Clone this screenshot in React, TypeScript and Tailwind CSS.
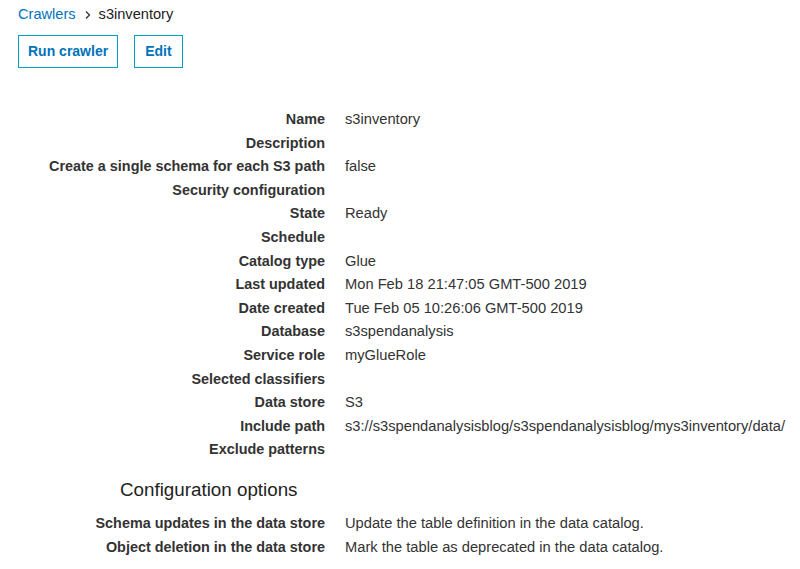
const details: [string, string][] = [
  ["Name", "s3inventory"],
  ["Description", ""],
  ["Create a single schema for each S3 path", "false"],
  ["Security configuration", ""],
  ["State", "Ready"],
  ["Schedule", ""],
  ["Catalog type", "Glue"],
  ["Last updated", "Mon Feb 18 21:47:05 GMT-500 2019"],
  ["Date created", "Tue Feb 05 10:26:06 GMT-500 2019"],
  ["Database", "s3spendanalysis"],
  ["Service role", "myGlueRole"],
  ["Selected classifiers", ""],
  ["Data store", "S3"],
  ["Include path", "s3://s3spendanalysisblog/s3spendanalysisblog/mys3inventory/data/"],
  ["Exclude patterns", ""],
]

const config: [string, string][] = [
  ["Schema updates in the data store", "Update the table definition in the data catalog."],
  ["Object deletion in the data store", "Mark the table as deprecated in the data catalog."],
]

function Rows({ rows }: { rows: [string, string][] }) {
  return (
    <div className="grid grid-cols-[325px_1fr] gap-x-5">
      {rows.map(([k, v]) => (
        <div key={k} className="contents">
          <div className="text-right font-bold text-[14.4px] leading-[23.6px] whitespace-nowrap">{k}</div>
          <div className="text-[14.7px] leading-[23.6px] whitespace-nowrap">{v}</div>
        </div>
      ))}
    </div>
  )
}

export default function App() {
  return (
    <div className="w-[800px] h-[569px] bg-white text-[#333] text-[14px] overflow-hidden" style={{ fontFamily: '"Liberation Sans", Arial, sans-serif' }}>
      <div className="px-[18px] pt-[1px] h-[28px] flex items-center text-[14.6px]">
        <a className="text-[#0073bb]">Crawlers</a>
        <svg width="10" height="10" viewBox="0 0 10 10" className="ml-[7px] mr-[6px]">
          <path d="M3 1.5 L6.5 5 L3 8.5" fill="none" stroke="#333" strokeWidth="1.3" />
        </svg>
        <span className="text-[#222]">s3inventory</span>
      </div>
      <div className="px-[18px] mt-[7px] flex gap-4">
        <button className="h-[33px] px-[9px] border border-[#00a1c9] text-[#0073bb] font-bold text-[14px]">Run crawler</button>
        <button className="h-[33px] px-[10px] border border-[#00a1c9] text-[#0073bb] font-bold text-[14px]">Edit</button>
      </div>
      <div className="mt-[40px]">
        <Rows rows={details} />
      </div>
      <div className="pl-[120px] mt-[16px] text-[18.8px] text-[#222] leading-[24px]">Configuration options</div>
      <div className="mt-[10px]">
        <Rows rows={config} />
      </div>
    </div>
  )
}
